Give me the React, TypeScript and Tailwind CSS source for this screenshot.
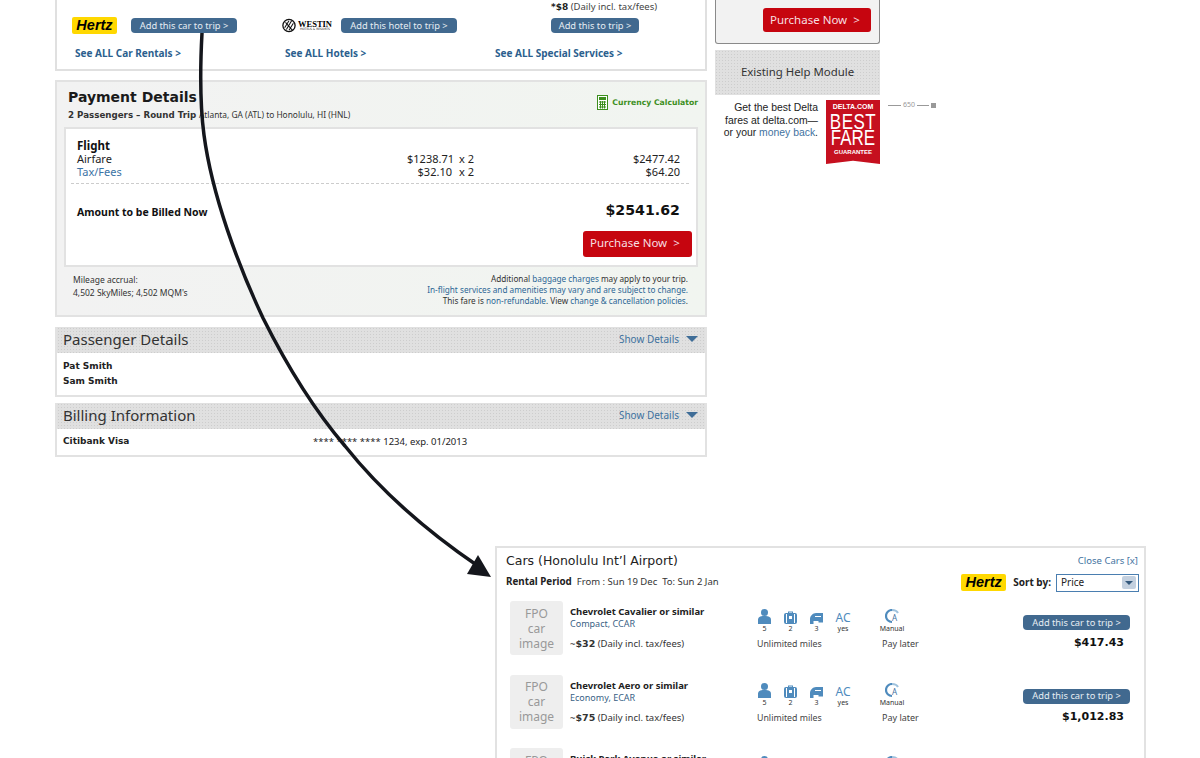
const sans = "font-['DejaVu_Sans',sans-serif]";
const tight = "font-['Noto_Sans',sans-serif]";
const dotted = "bg-[#e0e0e0] bg-[radial-gradient(#cdcdcd_0.7px,transparent_0.7px)] bg-[length:3px_3px]";

function HertzLogo({ className }: { className: string }) {
  return (
    <div className={`flex items-center justify-center rounded-[2px] bg-[#ffd800] ${className}`}>
      <span className="font-['Liberation_Sans',sans-serif] text-[14.5px] leading-none font-bold text-black italic">Hertz</span>
    </div>
  );
}

function BlueButton({ label, className }: { label: string; className: string }) {
  return (
    <button className={`flex h-[15px] items-center justify-center rounded-[4px] bg-[#41698f] text-[9.3px] leading-none whitespace-nowrap text-[#e6edf3] ${tight} ${className}`}>
      {label}
    </button>
  );
}

function RedButton({ className }: { className: string }) {
  return (
    <button className={`flex items-center rounded-[3px] bg-[#c6050f] pl-[7px] text-[11.5px] leading-none text-[#f7dfe0] ${tight} ${className}`}>
      Purchase Now &nbsp;&gt;
    </button>
  );
}

function WestinLogo() {
  return (
    <div className="flex w-[50px] items-center gap-[2px]">
      <svg width="16" height="17" viewBox="0 0 16 17" fill="none">
        <circle cx="8" cy="8.5" r="7" fill="#fff" stroke="#111" strokeWidth="1.5" />
        <path d="M3 11 8 3M5 13l6-10M8 14l5-8M4 5l8 9" stroke="#111" strokeWidth="1.2" />
      </svg>
      <div className="flex flex-col items-center">
        <span className="font-['Liberation_Serif',serif] text-[8.5px] leading-[8px] font-bold text-black">WESTIN</span>
        <span className="text-[3px] leading-[3px] text-[#222]">HOTELS &amp; RESORTS</span>
      </div>
    </div>
  );
}

function SeeAll({ label, className }: { label: string; className: string }) {
  return <a className={`text-[10px] font-bold whitespace-nowrap text-[#2c5f8e] ${tight} ${className}`}>{label}</a>;
}

function TripCard() {
  return (
    <div className="h-[71px] border-x-2 border-b-2 border-[#e0e0e0] pl-[15px]">
      <div className={`pt-[1px] pl-[479px] text-[9.5px] leading-[11px] text-[#444] ${tight}`}>
        <b className={`text-[9px] text-[#222] ${sans}`}>*$8</b> (Daily incl. tax/fees)
      </div>
      <div className="mt-[4px] flex h-[17px] items-center">
        <HertzLogo className="h-[17px] w-[45px]" />
        <BlueButton label="Add this car to trip >" className="ml-[14px] w-[106px]" />
        <div className="ml-[45px]">
          <WestinLogo />
        </div>
        <BlueButton label="Add this hotel to trip >" className="ml-[9px] w-[116px]" />
        <BlueButton label="Add this to trip >" className="ml-[94px] w-[88px]" />
      </div>
      <div className="mt-[12px] flex">
        <SeeAll label="See ALL Car Rentals >" className="ml-[3px] w-[210px]" />
        <SeeAll label="See ALL Hotels >" className="w-[210px]" />
        <SeeAll label="See ALL Special Services >" />
      </div>
    </div>
  );
}

function CalculatorIcon() {
  return (
    <svg width="11" height="15" viewBox="0 0 11 15">
      <rect x="0.5" y="0.5" width="10" height="14" fill="#fff" stroke="#3d8f1e" />
      <rect x="2" y="2" width="7" height="3" fill="#3d8f1e" />
      <path d="M2 7h7M2 9.5h7M2 12h7M3.5 6v7.5M5.5 6v7.5M7.5 6v7.5" stroke="#3d8f1e" />
    </svg>
  );
}

function FareLine({ label, each, total, link }: { label: string; each: string; total: string; link?: boolean }) {
  return (
    <div className={`flex h-[13px] items-center text-[11px] leading-none text-[#222] ${tight}`}>
      <span className={`w-[330px] ${link ? "text-[#3b73a5]" : ""}`}>{label}</span>
      <span className="w-[45px] text-right">{each}</span>
      <span className="ml-[7px] w-[40px]">x 2</span>
      <span className="w-[181px] text-right">{total}</span>
    </div>
  );
}

function PaymentCard() {
  return (
    <div className="mt-[9px] flex h-[237px] flex-col border-2 border-[#e2e2e2] bg-[#f2f2f2] bg-linear-to-r from-[#f2f2f2] to-[#f1f5f0]">
      <div className="flex h-[45px] items-start justify-between pt-[6px] pr-[7px] pl-[11px]">
        <div>
          <div className={`text-[14px] leading-[18px] font-bold text-[#1a1a1a] ${sans}`}>Payment Details</div>
          <div className={`mt-[3px] text-[8.7px] leading-[11px] text-[#333] ${sans}`}>
            <b>2 Passengers – Round Trip</b> <span className={`text-[8.4px] ${tight}`}>Atlanta, GA (ATL) to Honolulu, HI (HNL)</span>
          </div>
        </div>
        <div className="mt-[7px] flex items-center gap-[4px]">
          <CalculatorIcon />
          <span className={`text-[7.7px] font-bold text-[#3d8f1e] ${sans}`}>Currency Calculator</span>
        </div>
      </div>
      <div className="mx-[7px] h-[140px] border-2 border-[#e2e2e2] bg-white pt-[11px] pl-[11px]">
        <div className={`text-[11.5px] leading-[12px] font-bold text-[#111] ${tight}`}>Flight</div>
        <FareLine label="Airfare" each="$1238.71" total="$2477.42" />
        <FareLine label="Tax/Fees" each="$32.10" total="$64.20" link />
        <div className="mt-[5px] mr-[7px] -ml-[6px] border-b border-dashed border-[#ccc]" />
        <div className="mt-[17px] flex items-start justify-between pr-[16px]">
          <span className={`pt-[4px] text-[10.5px] font-bold text-[#111] ${tight}`}>Amount to be Billed Now</span>
          <span className={`text-[14.2px] leading-[18px] font-bold text-[#111] ${sans}`}>$2541.62</span>
        </div>
        <div className="mt-[10px] flex justify-end pr-[4px]">
          <RedButton className="h-[26px] w-[109px] pb-[2px]" />
        </div>
      </div>
      <div className={`flex justify-between pt-[6px] pr-[17px] pl-[16px] text-[8.2px] leading-[11px] text-[#333] ${tight}`}>
        <div className="text-[8.5px] leading-[13px]">
          Mileage accrual:
          <br />
          4,502 SkyMiles; 4,502 MQM's
        </div>
        <div className="text-right">
          Additional <span className="text-[#2c6695]">baggage charges</span> may apply to your trip.
          <br />
          <span className="text-[#2c6695]">In-flight services and amenities may vary and are subject to change.</span>
          <br />
          This fare is <span className="text-[#2c6695]">non-refundable</span>. View <span className="text-[#2c6695]">change &amp; cancellation policies</span>.
        </div>
      </div>
    </div>
  );
}

function Collapsible({ title, className, children }: { title: string; className: string; children: React.ReactNode }) {
  return (
    <div className={`border-x-2 border-b-2 border-[#e2e2e2] ${className}`}>
      <div className={`flex h-[26px] items-center justify-between pr-[7px] pb-[2px] pl-[6px] ${dotted}`}>
        <span className={`text-[15px] text-[#333] ${tight}`}>{title}</span>
        <div className="flex items-center gap-[7px]">
          <span className={`text-[10px] text-[#3f729f] ${tight}`}>Show Details</span>
          <span className="h-0 w-0 border-x-[6px] border-t-[6px] border-x-transparent border-t-[#3f6d97]" />
        </div>
      </div>
      {children}
    </div>
  );
}

function PassengerCards() {
  return (
    <>
      <Collapsible title="Passenger Details" className="mt-[10px] h-[70px]">
        <div className={`pt-[6px] pl-[6px] text-[9px] leading-[15px] font-bold text-[#222] ${sans}`}>
          <div>Pat Smith</div>
          <div>Sam Smith</div>
        </div>
      </Collapsible>
      <Collapsible title="Billing Information" className="mt-[6px] h-[54px]">
        <div className="flex pt-[5px] pl-[6px] leading-[15px] text-[#222]">
          <span className={`w-[250px] text-[9px] font-bold ${sans}`}>Citibank Visa</span>
          <span className={`text-[9.5px] ${tight}`}>**** **** **** 1234, exp. 01/2013</span>
        </div>
      </Collapsible>
    </>
  );
}

function RightColumn() {
  return (
    <div className="w-[165px]">
      <div className="flex h-[44px] justify-end rounded-b-[3px] border-x border-b border-[#8a8a8a] bg-[#f2f2f2] pt-[8px] pr-[8px]">
        <RedButton className="h-[24px] w-[108px]" />
      </div>
      <div className={`mt-[6px] flex h-[45px] items-center justify-center pb-[2px] text-[11.4px] text-[#333] ${tight} ${dotted}`}>Existing Help Module</div>
      <div className="mt-[5px] flex justify-end gap-[8px]">
        <div className="pt-[2px] text-right font-['Liberation_Sans',sans-serif] text-[10.4px] leading-[12.5px] whitespace-nowrap text-[#222]">
          Get the best Delta
          <br />
          fares at delta.com—
          <br />
          or your <span className="text-[#3f729f]">money back</span>.
        </div>
        <div className="flex h-[64px] w-[54px] shrink-0 flex-col items-center bg-[#c6101f] pt-[3px] font-['Liberation_Sans',sans-serif] text-white [clip-path:polygon(0_0,100%_0,100%_100%,50%_95%,0_100%)]">
          <span className="text-[7px] leading-[8px] font-bold">DELTA.COM</span>
          <span className="mt-[3px] scale-y-[1.25] text-[17px] leading-[17px] tracking-[0.5px]">BEST</span>
          <span className="mt-[-1px] scale-y-[1.25] text-[17px] leading-[17px]">FARE</span>
          <span className="mt-[1px] text-[6px] leading-[8px] font-bold">GUARANTEE</span>
        </div>
      </div>
    </div>
  );
}

function PersonIcon() {
  return (
    <svg width="13" height="15" viewBox="0 0 13 15" fill="#4f8bbd">
      <circle cx="6.5" cy="3.5" r="3.5" />
      <path d="M0 15V11c0-3 2-4 6.5-4s6.5 1 6.5 4v4z" />
    </svg>
  );
}

function BagIcon() {
  return (
    <svg width="13" height="13" viewBox="0 0 13 13" fill="#4f8bbd">
      <path d="M4 2V.5h5V2H8V1.5H5V2z" />
      <rect y="2" width="13" height="11" rx="2" />
      <path d="M2.5 3v9M10.5 3v9" stroke="#fff" fill="none" />
      <rect x="5" y="5" width="3" height="3" fill="#fff" />
    </svg>
  );
}

function SeatIcon() {
  return (
    <svg width="13" height="11" viewBox="0 0 13 11" fill="#4f8bbd">
      <path d="M0 11V6c0-3 3-6 6-6h7v9.5H8.5V8H3.5v3z" />
      <path d="M5 3.5h6" stroke="#fff" />
    </svg>
  );
}

function ManualIcon() {
  return (
    <svg width="15" height="15" viewBox="0 0 15 15" fill="none">
      <path d="M7 1a6 6 0 1 0 0 12" stroke="#4f8bbd" strokeWidth="2.2" />
      <path d="M7 1c3 0 5 1 6 3" stroke="#9fc2dd" strokeWidth="2" />
      <text x="7" y="12" fontSize="8" fill="#3f729f" fontFamily="Noto Sans">A</text>
    </svg>
  );
}

function Feature({ icon, label, className }: { icon: React.ReactNode; label: string; className: string }) {
  return (
    <div className={`flex h-[26px] flex-col items-center justify-end ${className}`}>
      {icon}
      <span className={`mt-[1px] text-[7px] leading-[8px] text-[#333] ${tight}`}>{label}</span>
    </div>
  );
}

function CarRow({ name, sub, daily, price }: { name: string; sub: string; daily: string; price: string }) {
  return (
    <div className="flex h-[73.5px] shrink-0">
      <div className={`flex h-[54px] w-[53px] flex-col items-center justify-center rounded-[3px] bg-[#eeeeee] text-[12px] leading-[15px] text-[#999] ${tight}`}>
        <span>FPO</span>
        <span>car</span>
        <span>image</span>
      </div>
      <div className={`ml-[7px] w-[187px] pt-[5px] text-[#333] ${tight}`}>
        <div className="text-[9.5px] leading-[12px] font-bold text-[#222]">{name}</div>
        <div className="text-[9px] leading-[11px] text-[#3a5f85]">{sub}</div>
        <div className="mt-[9px] text-[9.5px] leading-[12px]">
          ~<b className={sans}>{daily}</b> (Daily incl. tax/fees)
        </div>
      </div>
      <div className="w-[121px] pt-[6px]">
        <div className="flex h-[26px] items-end gap-[13px] pl-[1px]">
          <Feature icon={<PersonIcon />} label="5" className="w-[13px]" />
          <Feature icon={<BagIcon />} label="2" className="w-[13px]" />
          <Feature icon={<SeatIcon />} label="3" className="w-[13px]" />
          <Feature icon={<span className={`text-[12px] leading-[13px] text-[#4f8bbd] ${tight}`}>AC</span>} label="yes" className="w-[14px]" />
        </div>
        <div className={`mt-[5px] text-[8.8px] leading-[12px] text-[#444] ${tight}`}>Unlimited miles</div>
      </div>
      <div className="w-[145px] pt-[6px]">
        <Feature icon={<ManualIcon />} label="Manual" className="w-[28px]" />
        <div className={`mt-[5px] pl-[4px] text-[9px] leading-[12px] text-[#444] ${tight}`}>Pay later</div>
      </div>
      <div className="flex w-[107px] flex-col items-stretch pt-[14px]">
        <BlueButton label="Add this car to trip >" className="w-[107px]" />
        <div className={`mt-[5px] pr-[6px] text-right text-[11px] leading-[16px] font-bold text-[#111] ${sans}`}>{price}</div>
      </div>
    </div>
  );
}

function CarsPanel() {
  return (
    <div className="mt-[89px] ml-[495px] flex h-[300px] w-[651px] flex-col border-x-2 border-t-2 border-[#e2e2e2] pt-[5px] pr-[5px] pl-[9px]">
      <div className="flex h-[16px] items-center justify-between">
        <span className={`text-[12.5px] text-[#222] ${sans}`}>Cars (Honolulu Int’l Airport)</span>
        <span className={`mr-[1px] text-[9.5px] text-[#3f729f] ${tight}`}>Close Cars [x]</span>
      </div>
      <div className="mt-[4px] flex h-[19px] items-center">
        <span className={`text-[9.8px] font-bold text-[#222] ${tight}`}>Rental Period</span>
        <span className={`ml-[5px] text-[9.5px] text-[#333] ${tight}`}>From : Sun 19 Dec &nbsp;To: Sun 2 Jan</span>
        <HertzLogo className="mr-[-1px] ml-auto h-[17px] w-[45px]" />
        <span className={`ml-[8px] text-[10px] font-bold text-[#222] ${tight}`}>Sort by:</span>
        <div className={`ml-[5px] flex h-[18px] w-[83px] items-center justify-between border border-[#4a7eb0] pr-[2px] pl-[4px] text-[10px] text-[#222] ${tight}`}>
          Price
          <span className="flex h-[13px] w-[14px] items-center justify-center rounded-[2px] bg-[#c3d0df]">
            <span className="h-0 w-0 border-x-[4px] border-t-[4px] border-x-transparent border-t-[#33587c]" />
          </span>
        </div>
      </div>
      <div className="mt-[9px] flex flex-col pl-[4px]">
        <CarRow name="Chevrolet Cavalier or similar" sub="Compact, CCAR" daily="$32" price="$417.43" />
        <CarRow name="Chevrolet Aero or similar" sub="Economy, ECAR" daily="$75" price="$1,012.83" />
        <CarRow name="Buick Park Avenue or similar" sub="Fullsize, FCAR" daily="$80" price="$1,120.00" />
      </div>
    </div>
  );
}

function CurveArrow() {
  return (
    <svg className="pointer-events-none absolute inset-0" width="1200" height="758" viewBox="0 0 1200 758" fill="none">
      <path d="M202 33C200 70 200 105 204 135C212 195 238 265 263 318C285 362 310 405 345 446C380 490 425 530 478 566" stroke="#14161c" strokeWidth="3.5" />
      <path d="M491 577L467 574L478 555Z" fill="#14161c" />
    </svg>
  );
}

export default function App() {
  return (
    <div className={`relative h-[758px] w-[1200px] overflow-hidden bg-white ${sans}`}>
      <div className="flex h-[457px] items-start pl-[55px]">
        <div className="w-[652px]">
          <TripCard />
          <PaymentCard />
          <PassengerCards />
        </div>
        <div className="ml-[8px]">
          <RightColumn />
        </div>
        <div className={`mt-[100px] ml-[8px] flex items-center gap-[2px] text-[7px] leading-[10px] text-[#999] ${tight}`}>
          <span className="w-[13px] border-t border-[#999]" />
          650
          <span className="w-[12px] border-t border-[#999]" />
          <span className="h-[5px] w-[5px] bg-[#999]" />
        </div>
      </div>
      <CarsPanel />
      <CurveArrow />
    </div>
  );
}
